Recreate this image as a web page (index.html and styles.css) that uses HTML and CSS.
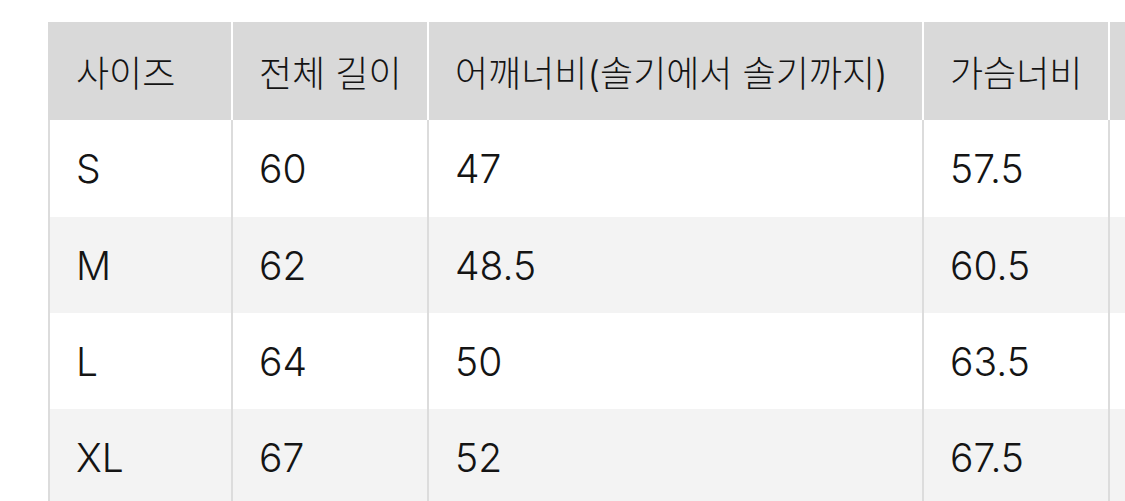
FILE: index.html
```html
<!DOCTYPE html>
<html lang="ko">
<head>
<meta charset="utf-8">
<link rel="stylesheet" href="styles.css">
</head>
<body>
<table class="size-table">
  <colgroup>
    <col class="c1"><col class="c2"><col class="c3"><col class="c4"><col class="c5">
  </colgroup>
  <thead>
    <tr>
      <th>사이즈</th>
      <th>전체 길이</th>
      <th>어깨너비(솔기에서 솔기까지)</th>
      <th>가슴너비</th>
      <th></th>
    </tr>
  </thead>
  <tbody>
    <tr class="r1"><td>S</td><td>60</td><td>47</td><td>57.5</td><td></td></tr>
    <tr class="alt"><td>M</td><td>62</td><td>48.5</td><td>60.5</td><td></td></tr>
    <tr><td>L</td><td>64</td><td>50</td><td>63.5</td><td></td></tr>
    <tr class="alt"><td>XL</td><td>67</td><td>52</td><td>67.5</td><td></td></tr>
  </tbody>
</table>
</body>
</html>
```

FILE: styles.css
```css
html, body {
  margin: 0;
  padding: 0;
  background: #ffffff;
  overflow: hidden;
}

body {
  font-family: Inter, "Noto Sans CJK KR", sans-serif;
  color: #141414;
}

.size-table {
  margin: 22px 0 0 48px;
  border-collapse: separate;
  border-spacing: 0;
  table-layout: fixed;
  width: 1262px;
}

.c1 { width: 185px; }
.c2 { width: 196px; }
.c3 { width: 495px; }
.c4 { width: 186px; }
.c5 { width: 200px; }

.size-table th,
.size-table td {
  font-weight: 300;
  text-align: left;
  vertical-align: middle;
  padding: 0 0 0 26px;
  white-space: nowrap;
  overflow: hidden;
}

.size-table th {
  font-size: 36px;
  height: 98px;
  background: #d9d9d9;
  border-right: 2px solid #ffffff;
}

.size-table th:first-child {
  border-left: 2px solid #d9d9d9;
}

.size-table td {
  font-size: 39px;
  height: 96px;
  border-right: 2px solid #dcdcdc;
  background: #ffffff;
}

.size-table td:first-child {
  border-left: 2px solid #dcdcdc;
}

.size-table tr.r1 td {
  height: 97px;
}

.size-table tr.alt td {
  background: #f3f3f3;
}
```
